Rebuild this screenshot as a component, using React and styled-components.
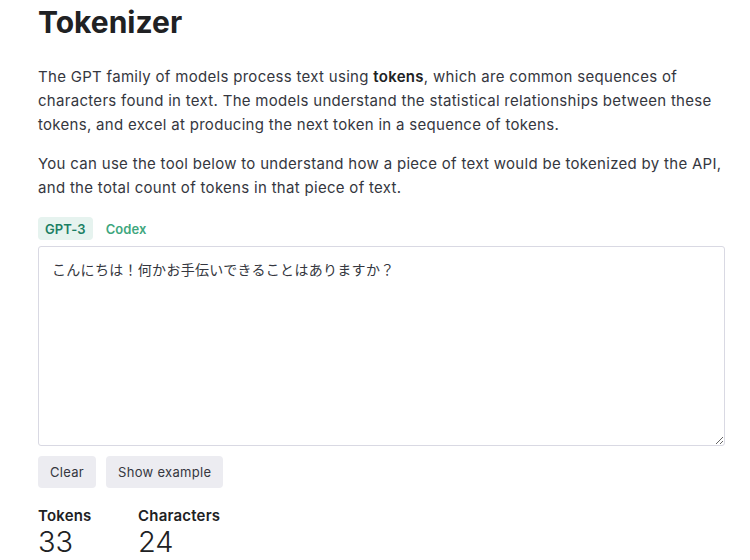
import React from "react"
import styled, { createGlobalStyle } from "styled-components"

const Global = createGlobalStyle`
  html, body {
    margin: 0;
    padding: 0;
    background: #fff;
  }
  body {
    font-family: Inter, "Noto Sans", "Noto Sans CJK JP", sans-serif;
    color: #353740;
  }
`

const Page = styled.div`
  width: 750px;
  height: 560px;
  overflow: hidden;
  padding: 0 25px 0 38px;
  box-sizing: border-box;
`

const Title = styled.h1`
  margin: 4px 0 0;
  font-size: 30px;
  line-height: 36px;
  font-weight: 700;
  color: #202123;
`

const Para = styled.p`
  margin: ${p => p.$top || 0}px 0 0;
  font-size: 15px;
  line-height: 24px;
  letter-spacing: 0.3px;
  color: #353740;
  b {
    font-weight: 600;
    color: #202123;
  }
`

const Tabs = styled.div`
  display: flex;
  gap: 6px;
  margin-top: 17px;
`

const Tab = styled.button`
  border: none;
  border-radius: 4px;
  padding: 0 7px;
  height: 23px;
  font-family: inherit;
  font-size: 13px;
  font-weight: 600;
  letter-spacing: 0.1px;
  background: ${p => (p.$active ? "#e6f3ef" : "transparent")};
  color: ${p => (p.$active ? "#1a7f64" : "#3fa77e")};
`

const Input = styled.textarea`
  display: block;
  margin-top: 6px;
  width: 687px;
  height: 200px;
  box-sizing: border-box;
  border: 1px solid #d9d9e3;
  border-radius: 3px;
  padding: 12px 13px;
  font-family: "Noto Sans CJK JP", sans-serif;
  font-size: 14px;
  line-height: 20px;
  letter-spacing: 0.3px;
  color: #353740;
  resize: vertical;
  outline: none;
`

const Actions = styled.div`
  display: flex;
  gap: 10px;
  margin-top: 10px;
`

const Btn = styled.button`
  border: none;
  border-radius: 4px;
  background: #ececf1;
  height: 32px;
  padding: 0 12px;
  font-family: inherit;
  font-size: 13px;
  letter-spacing: 0.3px;
  color: #353740;
`

const Stats = styled.div`
  display: flex;
  margin-top: 19px;
`

const Stat = styled.div`
  display: flex;
  flex-direction: column;
  width: 100px;
`

const StatLabel = styled.div`
  font-size: 15px;
  line-height: 18px;
  font-weight: 600;
  letter-spacing: 0.2px;
  color: #202123;
`

const StatValue = styled.div`
  font-size: 29px;
  line-height: 34px;
  font-weight: 300;
  color: #202123;
`

export default function App() {
  return (
    <Page>
      <Global />
      <Title>Tokenizer</Title>
      <Para $top={25}>
        The GPT family of models process text using <b>tokens</b>, which are common sequences of
        characters found in text. The models understand the statistical relationships between these
        tokens, and excel at producing the next token in a sequence of tokens.
      </Para>
      <Para $top={15}>
        You can use the tool below to understand how a piece of text would be tokenized by the API,
        and the total count of tokens in that piece of text.
      </Para>
      <Tabs>
        <Tab $active>GPT-3</Tab>
        <Tab>Codex</Tab>
      </Tabs>
      <Input defaultValue="こんにちは！何かお手伝いできることはありますか？" />
      <Actions>
        <Btn>Clear</Btn>
        <Btn>Show example</Btn>
      </Actions>
      <Stats>
        <Stat>
          <StatLabel>Tokens</StatLabel>
          <StatValue>33</StatValue>
        </Stat>
        <Stat>
          <StatLabel>Characters</StatLabel>
          <StatValue>24</StatValue>
        </Stat>
      </Stats>
    </Page>
  )
}
